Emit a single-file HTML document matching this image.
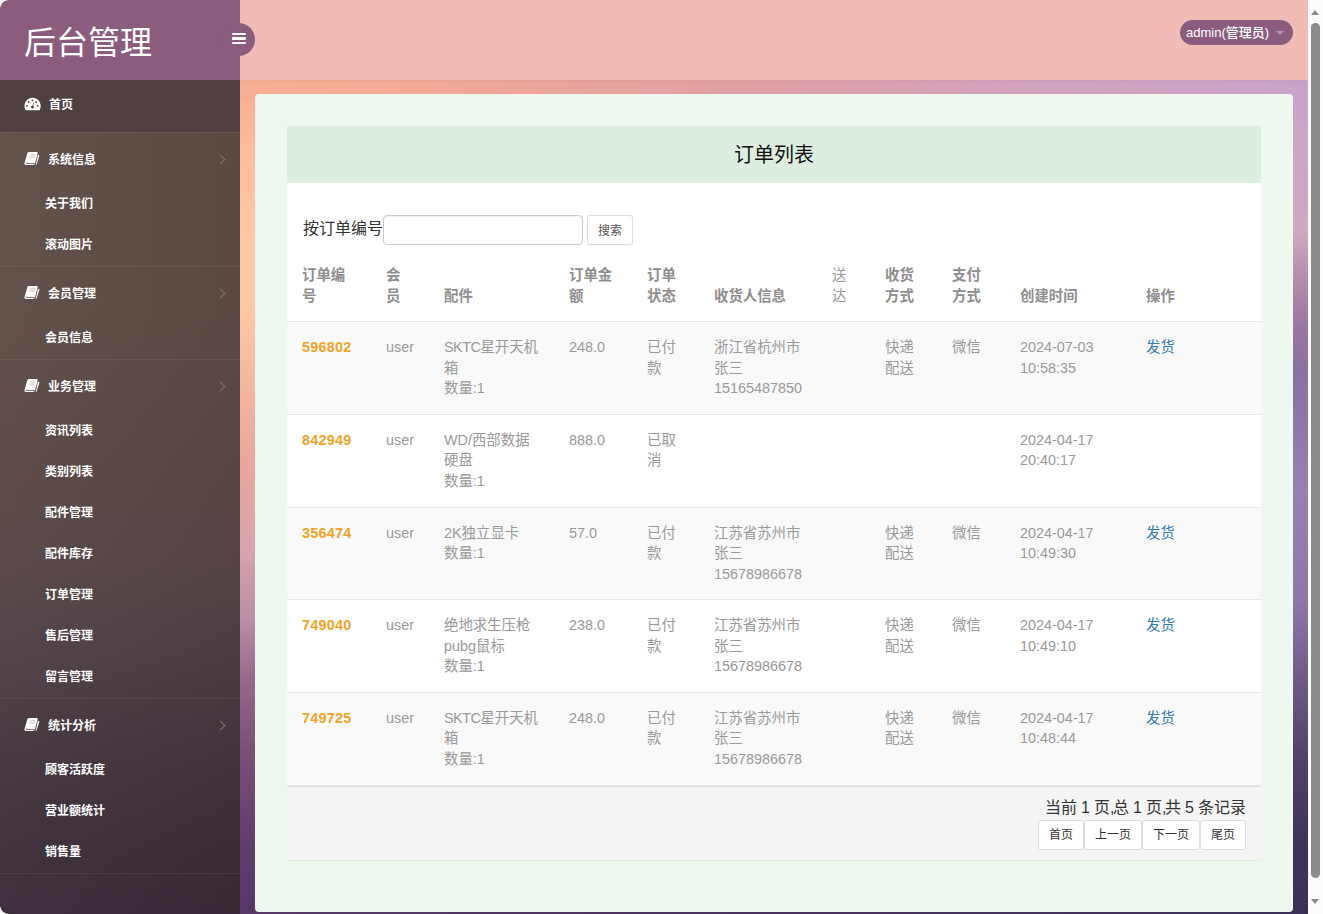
<!DOCTYPE html>
<html lang="zh-CN">
<head>
<meta charset="utf-8">
<title>后台管理</title>
<style>
*{box-sizing:border-box;margin:0;padding:0}
html,body{width:1323px;height:914px;overflow:hidden}
body{position:relative;font-family:"Liberation Sans","Noto Sans CJK SC",sans-serif;font-size:14px;color:#999;background:#fff}
a{text-decoration:none}
#bg{position:absolute;left:0;top:0;width:1308px;height:914px;
 background:linear-gradient(180deg,#f8ac94 80px,#fab59a 115px,#fcbd9e 155px,#ffc8a6 240px,#ffc9a6 300px,#eba89c 455px,#d8a3ad 550px,#b88fa4 620px,#96698b 680px,#7a5078 750px,#5e3c6c 850px,#553868 914px)}
#bgtop{position:absolute;left:240px;top:80px;width:1068px;height:20px;
 background:linear-gradient(90deg,#f8ae95 0,#f3ab95 160px,#eaa49b 300px,#e0a0a6 520px,#d4a4bd 760px,#cba5c9 1050px)}
#bgright{position:absolute;left:1285px;top:80px;width:23px;height:834px;
 background:linear-gradient(180deg,#c9a4c9 10px,#d0a9c2 150px,#b38daa 200px,#9777a1 250px,#8b70a1 290px,#9880b0 410px,#8f78a8 520px,#6f5a88 600px,#514068 680px,#3e3259 770px,#3b3058 834px)}
#bgbottom{position:absolute;left:240px;top:900px;width:1068px;height:14px;background:linear-gradient(90deg,#553868,#3b3058)}

/* sidebar */
#side{position:absolute;left:0;top:0;width:240px;height:914px;
 background:linear-gradient(90deg,rgba(255,255,255,.025),rgba(0,0,0,.05)),linear-gradient(180deg,#5f4d47 0,#5f4d47 300px,#5d4a46 400px,#5b4845 470px,#574647 560px,#4f4045 650px,#4a3b42 700px,#42333c 780px,#3c2e39 860px,#3a2c38 914px)}
#brand{position:absolute;left:0;top:0;width:240px;height:80px;background:#8b5c7e;color:#fff;font-size:32px;font-weight:400;line-height:86px;padding-left:24px}
#toggle{position:absolute;left:222px;top:22.500px;width:33px;height:33px;border-radius:50%;background:#8b5c7e}
#toggle i{position:absolute;left:9.500px;width:14px;height:2.600px;background:#fff;border-radius:1px}
.mi{position:absolute;left:0;width:240px;color:#fff;font-weight:700;font-size:12px;line-height:20px;white-space:nowrap;margin-top:1px}
.mi.sub{padding-left:45px}
.mi.head{padding-left:48px}
.sep{position:absolute;left:0;width:240px;height:1px;background:rgba(255,255,255,.07)}
.chev{position:absolute;left:217px;margin-top:1px;width:7px;height:7px;border-top:1px solid #85746f;border-right:1px solid #85746f;transform:rotate(45deg)}
.ico{position:absolute;left:25px}

/* top bar */
#top{position:absolute;left:240px;top:0;width:1068px;height:80px;background:#f1bcb5;box-shadow:0 1px 3px rgba(120,60,80,.07)}
#user{position:absolute;left:1180px;top:20px;width:113px;height:25px;border-radius:13px;background:#8b5c7e;color:#fff;font-size:13px;font-weight:500;line-height:25px;padding-left:6px;white-space:nowrap}
#user b{position:absolute;left:96px;top:11px;width:0;height:0;border:4px solid transparent;border-top-color:#a999bd;border-bottom:0}

/* card */
#card{position:absolute;left:255px;top:94px;width:1038px;height:818px;background:#eff8ef;border-radius:4px}
#ph{position:absolute;left:287px;top:126px;width:974px;height:57px;background:#ddeee0;color:#111;font-size:20px;line-height:58px;text-align:center}
#pb{position:absolute;left:287px;top:183px;width:974px;height:603px;background:#fff}
#pf{position:absolute;left:287px;top:786px;width:974px;height:75px;background:#f5f5f5;border-top:1px solid #ddd;border-bottom:1px solid #e8e8e8}

/* scrollbar */
#sb{position:absolute;left:1308px;top:0;width:15px;height:914px;background:#fcfcfc}
#sb .th{position:absolute;left:3px;top:23px;width:9px;height:855px;border-radius:5px;background:#8b8b8b}
#sb .up{position:absolute;left:3px;top:10px;width:0;height:0;border:4.5px solid transparent;border-bottom:5px solid #8b8b8b;border-top:0}
#sb .dn{position:absolute;left:3px;top:899px;width:0;height:0;border:4.5px solid transparent;border-top:5px solid #8b8b8b;border-bottom:0}

/* search */
#sl{position:absolute;left:303px;top:217px;font-size:16px;line-height:24px;color:#333;white-space:nowrap}
#si{position:absolute;left:383px;top:215px;width:200px;height:30px;border:1px solid #ccc;border-radius:4px;background:#fff;box-shadow:inset 0 1px 1px rgba(0,0,0,.06)}
#sbtn{position:absolute;left:587px;top:215px;width:46px;height:30px;border:1px solid #ddd;border-radius:3px;background:#fff;color:#555;font-size:12px;line-height:31px;text-align:center;box-shadow:0 1px 1px rgba(0,0,0,.04)}
/* table */
#tb{position:absolute;left:287px;top:250px;width:974px;border-collapse:collapse;table-layout:fixed;font-size:14.4px;line-height:20.57px;color:#999}
#tb th,#tb td{padding:15px;text-align:left;vertical-align:top;white-space:normal;word-break:normal;font-weight:400}
#tb i{font-style:normal;letter-spacing:-.5px}
#tb th{vertical-align:bottom;font-weight:700;color:#8e8e8e;border-bottom:1px solid #e7e7e7}
#tb th.n{font-weight:400;color:#999}
#tb td{border-bottom:1px solid #e7e7e7}
#tb tr.o td{background:#f9f9f9}
#tb a.no{color:#f0a328;font-weight:700;letter-spacing:.25px}
#tb a.op{color:#337ab7}
/* pager */
#pt span{letter-spacing:-1.3px}
#pt{word-spacing:-.45px;position:absolute;left:900px;top:796px;width:346px;text-align:right;font-size:16px;line-height:24px;color:#333;white-space:nowrap}
.pg{position:absolute;top:820px;height:30px;border:1px solid #ddd;border-radius:3px;background:#fff;color:#333;font-size:12px;line-height:28px;text-align:center}
.wc{position:absolute;width:9px;height:9px}
</style>
</head>
<body>
<div id="bg"></div><div id="bgtop"></div><div id="bgright"></div><div id="bgbottom"></div>

<div id="side"></div>
<div id="nav">
<div style="position:absolute;left:0;top:80px;width:240px;height:52px;background:#4f403f"></div>
<div class="mi head" style="top:94px;padding-left:49px"><svg class="ico" style="left:24px;top:2px" width="17" height="14" viewBox="0 0 17 14"><path d="M8.600.7A8.300 8.300 0 0 0 1.300 12.700Q1.600 13.200 2.200 13.200H14.900Q15.500 13.200 15.800 12.700A8.300 8.300 0 0 0 8.600.7Z" fill="#fff"/><g fill="#4f403f"><circle cx="8.450" cy="3.400" r=".85"/><circle cx="4.600" cy="5" r=".9"/><circle cx="12.200" cy="5" r=".9"/><circle cx="3" cy="8.850" r=".9"/><circle cx="13.800" cy="8.850" r=".9"/><circle cx="8.400" cy="10.200" r="1.400"/><path d="M9.400 5.200l.5.120-1 4.700-.8-.17z"/></g></svg>首页</div>
<div class="sep" style="top:132px"></div>
<div class="mi head" style="top:149px"><svg class="ico" style="left:24px;top:1px" width="16" height="15" viewBox="0 0 16 15"><path d="M5.200.9H12.800Q14 .9 13.700 2.100L11.200 11.800Q10.700 13.900 9 13.900H1.900Q0 13.900.5 12L3.400 2.100Q3.800.9 5.200.9Z" fill="#fff"/><path d="M13.900 3.700L15.500 4.200L12.800 13Q12.400 14 11.300 13.900Q11.900 13.500 12.100 12.600Z" fill="#fff"/><path d="M1.900 11.500Q1.700 12.400 2.800 12.400H10.500" fill="none" stroke="#5f4d47" stroke-width=".8"/><path d="M6.300 3.800H11.500M5.700 6.100H10.900" fill="none" stroke="#cfc8c5" stroke-width="1.200"/></svg>系统信息</div>
<div class="chev" style="top:155px"></div>
<div class="mi sub" style="top:193px">关于我们</div>
<div class="mi sub" style="top:234px">滚动图片</div>
<div class="sep" style="top:266px"></div>
<div class="mi head" style="top:283px"><svg class="ico" style="left:24px;top:1px" width="16" height="15" viewBox="0 0 16 15"><path d="M5.200.9H12.800Q14 .9 13.700 2.100L11.200 11.800Q10.700 13.900 9 13.900H1.900Q0 13.900.5 12L3.400 2.100Q3.800.9 5.200.9Z" fill="#fff"/><path d="M13.900 3.700L15.500 4.200L12.800 13Q12.400 14 11.300 13.900Q11.900 13.500 12.100 12.600Z" fill="#fff"/><path d="M1.900 11.500Q1.700 12.400 2.800 12.400H10.500" fill="none" stroke="#5f4d47" stroke-width=".8"/><path d="M6.300 3.800H11.500M5.700 6.100H10.900" fill="none" stroke="#cfc8c5" stroke-width="1.200"/></svg>会员管理</div>
<div class="chev" style="top:289px"></div>
<div class="mi sub" style="top:327px">会员信息</div>
<div class="sep" style="top:359px"></div>
<div class="mi head" style="top:376px"><svg class="ico" style="left:24px;top:1px" width="16" height="15" viewBox="0 0 16 15"><path d="M5.200.9H12.800Q14 .9 13.700 2.100L11.200 11.800Q10.700 13.900 9 13.900H1.900Q0 13.900.5 12L3.400 2.100Q3.800.9 5.200.9Z" fill="#fff"/><path d="M13.900 3.700L15.500 4.200L12.800 13Q12.400 14 11.300 13.900Q11.900 13.500 12.100 12.600Z" fill="#fff"/><path d="M1.900 11.500Q1.700 12.400 2.800 12.400H10.500" fill="none" stroke="#5f4d47" stroke-width=".8"/><path d="M6.300 3.800H11.500M5.700 6.100H10.900" fill="none" stroke="#cfc8c5" stroke-width="1.200"/></svg>业务管理</div>
<div class="chev" style="top:382px"></div>
<div class="mi sub" style="top:420px">资讯列表</div>
<div class="mi sub" style="top:461px">类别列表</div>
<div class="mi sub" style="top:502px">配件管理</div>
<div class="mi sub" style="top:543px">配件库存</div>
<div class="mi sub" style="top:584px">订单管理</div>
<div class="mi sub" style="top:625px">售后管理</div>
<div class="mi sub" style="top:666px">留言管理</div>
<div class="sep" style="top:698px"></div>
<div class="mi head" style="top:715px"><svg class="ico" style="left:24px;top:1px" width="16" height="15" viewBox="0 0 16 15"><path d="M5.200.9H12.800Q14 .9 13.700 2.100L11.200 11.800Q10.700 13.900 9 13.900H1.900Q0 13.900.5 12L3.400 2.100Q3.800.9 5.200.9Z" fill="#fff"/><path d="M13.900 3.700L15.500 4.200L12.800 13Q12.400 14 11.300 13.900Q11.900 13.500 12.100 12.600Z" fill="#fff"/><path d="M1.900 11.500Q1.700 12.400 2.800 12.400H10.500" fill="none" stroke="#5f4d47" stroke-width=".8"/><path d="M6.300 3.800H11.500M5.700 6.100H10.900" fill="none" stroke="#cfc8c5" stroke-width="1.200"/></svg>统计分析</div>
<div class="chev" style="top:721px"></div>
<div class="mi sub" style="top:759px">顾客活跃度</div>
<div class="mi sub" style="top:800px">营业额统计</div>
<div class="mi sub" style="top:841px">销售量</div>
<div class="sep" style="top:873px"></div>
</div>
<div id="top"></div>
<div id="brand">后台管理</div>
<div id="toggle"><i style="top:10.300px"></i><i style="top:14.800px"></i><i style="top:19.300px"></i></div>
<div id="user">admin(管理员)<b></b></div>

<div id="card"></div>
<div id="ph">订单列表</div>
<div id="pb"></div>
<div id="pf"></div>

<div id="sl">按订单编号</div><div id="si"></div><div id="sbtn">搜索</div>
<table id="tb"><colgroup><col style="width:84px"><col style="width:58px"><col style="width:125px"><col style="width:78px"><col style="width:67px"><col style="width:118px"><col style="width:53px"><col style="width:67px"><col style="width:68px"><col style="width:126px"><col style="width:130px"></colgroup>
<thead><tr><th>订单编号</th><th>会员</th><th>配件</th><th>订单金额</th><th>订单状态</th><th>收货人信息</th><th class="n">送达</th><th>收货方式</th><th>支付方式</th><th>创建时间</th><th>操作</th></tr></thead>
<tbody>
<tr class="o"><td><a class="no">596802</a></td><td>user</td><td><i>SKTC</i>星开天机箱<br>数量:1</td><td>248.0</td><td>已付款</td><td>浙江省杭州市<br>张三<br>15165487850</td><td></td><td>快递配送</td><td>微信</td><td>2024-07-03 10:58:35</td><td><a class="op">发货</a></td></tr>
<tr><td><a class="no">842949</a></td><td>user</td><td>WD/西部数据硬盘<br>数量:1</td><td>888.0</td><td>已取消</td><td></td><td></td><td></td><td></td><td>2024-04-17 20:40:17</td><td></td></tr>
<tr class="o"><td><a class="no">356474</a></td><td>user</td><td>2K独立显卡<br>数量:1</td><td>57.0</td><td>已付款</td><td>江苏省苏州市<br>张三<br>15678986678</td><td></td><td>快递配送</td><td>微信</td><td>2024-04-17 10:49:30</td><td><a class="op">发货</a></td></tr>
<tr><td><a class="no">749040</a></td><td>user</td><td>绝地求生压枪pubg鼠标<br>数量:1</td><td>238.0</td><td>已付款</td><td>江苏省苏州市<br>张三<br>15678986678</td><td></td><td>快递配送</td><td>微信</td><td>2024-04-17 10:49:10</td><td><a class="op">发货</a></td></tr>
<tr class="o"><td><a class="no">749725</a></td><td>user</td><td><i>SKTC</i>星开天机箱<br>数量:1</td><td>248.0</td><td>已付款</td><td>江苏省苏州市<br>张三<br>15678986678</td><td></td><td>快递配送</td><td>微信</td><td>2024-04-17 10:48:44</td><td><a class="op">发货</a></td></tr>
</tbody></table>
<div id="pt">当前 1 页<span>,</span>总 1 页<span>,</span>共 5 条记录</div>
<div class="pg" style="left:1038px;width:46px">首页</div><div class="pg" style="left:1084px;width:58px">上一页</div><div class="pg" style="left:1142px;width:58px">下一页</div><div class="pg" style="left:1200px;width:46px">尾页</div>
<div id="sb"><div class="up"></div><div class="th"></div><div class="dn"></div></div>
<div class="wc" style="left:0;top:0;background:radial-gradient(circle at 9px 9px,transparent 8.500px,#fff 9.300px)"></div>
<div class="wc" style="left:0;top:905px;background:radial-gradient(circle at 9px 0,transparent 8.500px,#fff 9.300px)"></div>
</body>
</html>
